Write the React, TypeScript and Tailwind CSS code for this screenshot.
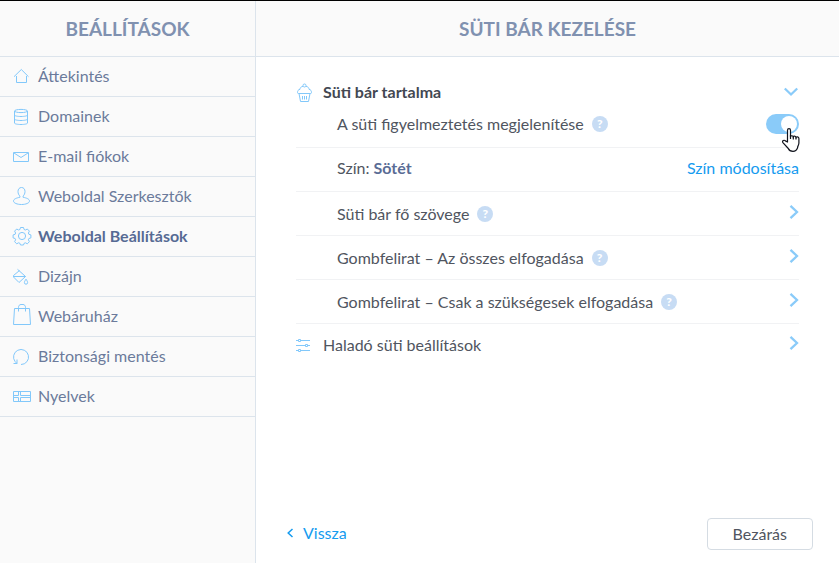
import { useState } from 'react';
import type { ReactNode } from 'react';

type NavItem = { label: string; icon: ReactNode; active?: boolean };

const navItems: NavItem[] = [
  {
    label: 'Áttekintés',
    icon: <path d="M2 11.700 9.300 4.500l7.200 7.200M4.500 11v6.500h10V11" />,
  },
  {
    label: 'Domainek',
    icon: (
      <>
        <ellipse cx="9" cy="6" rx="6.500" ry="1.600" />
        <path d="M2.500 6v12c0 .9 2.900 1.500 6.500 1.500s6.500-.6 6.500-1.500V6M2.500 10c0 .9 2.900 1.500 6.500 1.500s6.500-.6 6.500-1.500M2.500 14c0 .9 2.900 1.500 6.500 1.500s6.500-.6 6.500-1.500" />
      </>
    ),
  },
  {
    label: 'E-mail fiókok',
    icon: <path d="M1.500 7.500h15v9h-15zM2 8l7 4.500L16 8" />,
  },
  {
    label: 'Weboldal Szerkesztők',
    icon: (
      <path d="M9.500 2.500c2.200 0 3.500 1.700 3.500 4 0 2-.8 3.600-1.900 4.500v1.300c3.600.6 6.400 1.900 6.400 3.700 0 2-3.600 3.500-8 3.500s-8-1.500-8-3.500c0-1.800 2.800-3.100 6.400-3.700V11C6.800 10.100 6 8.500 6 6.500c0-2.300 1.300-4 3.500-4z" />
    ),
  },
  {
    label: 'Weboldal Beállítások',
    active: true,
    icon: (
      <>
        <circle cx="10" cy="11" r="3.600" />
        <path d="M8.500 2.500h3l.6 2 1.300.5 1.900-1 2.100 2.100-1 1.900.5 1.300 2 .6v3l-2 .6-.5 1.300 1 1.900-2.100 2.100-1.900-1-1.300.5-.6 1.700h-3l-.6-1.700-1.300-.5-1.900 1-2.100-2.100 1-1.900-.5-1.300-2-.6v-3l2-.6.5-1.300-1-1.900L4.700 4l1.900 1 1.300-.5z" />
      </>
    ),
  },
  {
    label: 'Dizájn',
    icon: <path d="M5.500 4.300l8 7.200-6.500 6-5.500-5.500v-1.500l6-5M1.500 11.500h12M14 14.200c1 1.500 1.600 2.400 1.600 3.400a1.600 1.600 0 0 1-3.200 0c0-1 .6-1.900 1.600-3.400z" />,
  },
  {
    label: 'Webáruház',
    icon: <path d="M2.500 3.500h15l1 16h-17zM6.500 6.500V2.500c0-1.800 1-3 2.500-3h2c1.500 0 2.500 1.200 2.500 3v4" />,
  },
  {
    label: 'Biztonsági mentés',
    icon: <path d="M9 19.500a7.500 7.500 0 1 0-5.800-2.800L5 18.500M1.500 18.500H5v-4" />,
  },
  {
    label: 'Nyelvek',
    icon: <path d="M1.500 6.500h17v10h-17zM6.500 6.500v4h-5M8.500 6.500v4h10M6.500 16.500v-4h-5M8.500 16.500v-4h10" />,
  },
];

function Chevron() {
  return (
    <svg className="-mt-1 h-4 w-[10px] shrink-0" viewBox="0 0 10 16" fill="none" stroke="#8acbf9" strokeWidth="2.300" aria-hidden="true">
      <path d="M1.500 1.800 8 8l-6.500 6.200" />
    </svg>
  );
}

function Help() {
  return (
    <span role="img" aria-label="Súgó" className="ml-2 flex size-4 shrink-0 items-center justify-center rounded-full bg-[#c7dcf4] text-[12px] leading-4 font-black text-white">
      ?
    </span>
  );
}

function HandCursor() {
  return (
    <svg className="pointer-events-none absolute top-[14px] left-4 h-6 w-[18px]" viewBox="0 0 18 24" fill="#fff" stroke="#10131c" strokeWidth="1.200" strokeLinejoin="round" aria-hidden="true">
      <path d="M5.500 14V2.200C5.500.2 8.500.2 8.500 2.200V9c0-1.700 2.800-1.700 2.800.2 0-1.500 2.700-1.500 2.700.6 0-1.400 2.900-1.300 2.900.8V15c0 2-1.400 3.500-1.400 5-.8 2.200-2.500 3.300-4.500 3.300-2.300 0-4-1-4.700-2.800L.9 14.600c-1-1.900 1.200-3.100 2.500-1.700z" />
      <path fill="none" d="M8.500 7v4M11.300 8.500v3M14 9.500v2" />
    </svg>
  );
}

const rowClass = 'flex h-11 w-full items-center justify-between border-b border-[#f1f2f4] pl-[41px] text-left';

function LinkRow({ label }: { label: string }) {
  return (
    <button type="button" className={rowClass}>
      <span className="flex items-center">
        {label}
        <Help />
      </span>
      <Chevron />
    </button>
  );
}

export default function App() {
  const [shown, setShown] = useState(true);

  return (
    <div className="flex min-h-screen border-t border-black bg-white font-['Lato',sans-serif] text-[16px] leading-5 text-[#505560]">
      <aside className="w-64 shrink-0 border-r border-[#dce4ec] bg-[#fafafa]">
        <h2 className="flex h-14 items-center justify-center border-b border-[#dce4ec] text-[19px] font-bold text-[#8091b0]">
          BEÁLLÍTÁSOK
        </h2>
        <nav>
          {navItems.map((item) => (
            <a
              key={item.label}
              href="#"
              aria-current={item.active ? 'page' : undefined}
              className={
                'flex h-10 items-center gap-[6px] border-b border-[#dce4ec] pl-3 ' +
                (item.active ? 'font-bold text-[#566a94]' : 'text-[#6b7a9b]')
              }
            >
              <svg className="h-[23px] w-5 shrink-0 overflow-visible" viewBox="0 0 20 23" fill="none" stroke="#82c8fa" strokeWidth="1" aria-hidden="true">
                {item.icon}
              </svg>
              <span className="pb-[2px]">{item.label}</span>
            </a>
          ))}
        </nav>
      </aside>

      <main className="flex min-w-0 flex-1 flex-col">
        <h1 className="flex h-14 items-center justify-center border-b border-[#dce4ec] bg-[#fafafa] text-[19px] font-bold text-[#8091b0]">
          SÜTI BÁR KEZELÉSE
        </h1>

        <div className="flex-1 px-10 pt-[23px]">
          <button type="button" className="flex h-6 w-full items-center text-left font-bold text-[#434852]">
            <svg className="mt-[2px] mr-[10px] h-5 w-[17px]" viewBox="0 0 17 20" fill="none" stroke="#82c8fa" strokeWidth="1" aria-hidden="true">
              <circle cx="8.500" cy="2.500" r="1.500" />
              <path d="M7 3.300C4.800 3.700 4 5 4 6.300 2.200 6.500 1.500 8 1.500 9.500c0 .8.500 1 1.200 1h11.600c.7 0 1.200-.2 1.200-1 0-1.500-.7-3-2.500-3.200C13 5 12.200 3.700 10 3.300M3 10.500l1.500 8h8l1.500-8M6.500 13v3.500M8.500 13v3.500M10.500 13v3.500" />
            </svg>
            <span className="flex-1">Süti bár tartalma</span>
            <svg className="h-[10px] w-4" viewBox="0 0 16 10" fill="none" stroke="#8acbf9" strokeWidth="2.300" aria-hidden="true">
              <path d="M1.800 1.500 8 7.500l6.200-6" />
            </svg>
          </button>

          <div className={rowClass + ' pb-[3px]'}>
            <span className="flex items-center">
              <label htmlFor="show-bar">A süti figyelmeztetés megjelenítése</label>
              <Help />
            </span>
            <span className="relative flex shrink-0 items-center">
              <input
                id="show-bar"
                type="checkbox"
                role="switch"
                checked={shown}
                onChange={(e) => setShown(e.target.checked)}
                className="h-5 w-[33px] appearance-none rounded-full bg-[#c9d3de] p-[2px] before:block before:size-4 before:rounded-full before:bg-white checked:bg-[#8acbf9] checked:before:ml-[13px]"
              />
              <HandCursor />
            </span>
          </div>

          <div className={rowClass + ' pb-[3px]'}>
            <span>
              Szín: <strong className="font-bold text-[#5a6c95]">Sötét</strong>
            </span>
            <a href="#" className="text-[#159bef]">Szín módosítása</a>
          </div>

          <LinkRow label="Süti bár fő szövege" />
          <LinkRow label="Gombfelirat – Az összes elfogadása" />
          <LinkRow label="Gombfelirat – Csak a szükségesek elfogadása" />

          <button type="button" className="flex h-[42px] w-full items-center text-left">
            <svg className="mr-3 h-[17px] w-[15px]" viewBox="0 0 15 17" fill="none" stroke="#82c8fa" strokeWidth="1" aria-hidden="true">
              <path d="M0 3.500h2.500m2 0H14M0 8.500h9.500m2 0H14M0 13.500h2.500m2 0H14M2.500 2.500h2v2h-2zM9.500 7.500h2v2h-2zM2.500 12.500h2v2h-2z" />
            </svg>
            <span className="flex-1">Haladó süti beállítások</span>
            <Chevron />
          </button>
        </div>

        <footer className="flex items-center justify-between pr-[26px] pb-[13px] pl-[30px]">
          <a href="#" className="flex items-center gap-[9px] pb-[2px] text-[#159bef]">
            <svg className="h-[10px] w-2" viewBox="0 0 8 10" fill="none" stroke="currentColor" strokeWidth="1.500" aria-hidden="true">
              <path d="M6.500 1 2.200 5l4.300 4" />
            </svg>
            Vissza
          </a>
          <button type="button" className="h-8 rounded-[4px] border border-[#d5dce3] bg-white px-[25px]">
            Bezárás
          </button>
        </footer>
      </main>
    </div>
  );
}
